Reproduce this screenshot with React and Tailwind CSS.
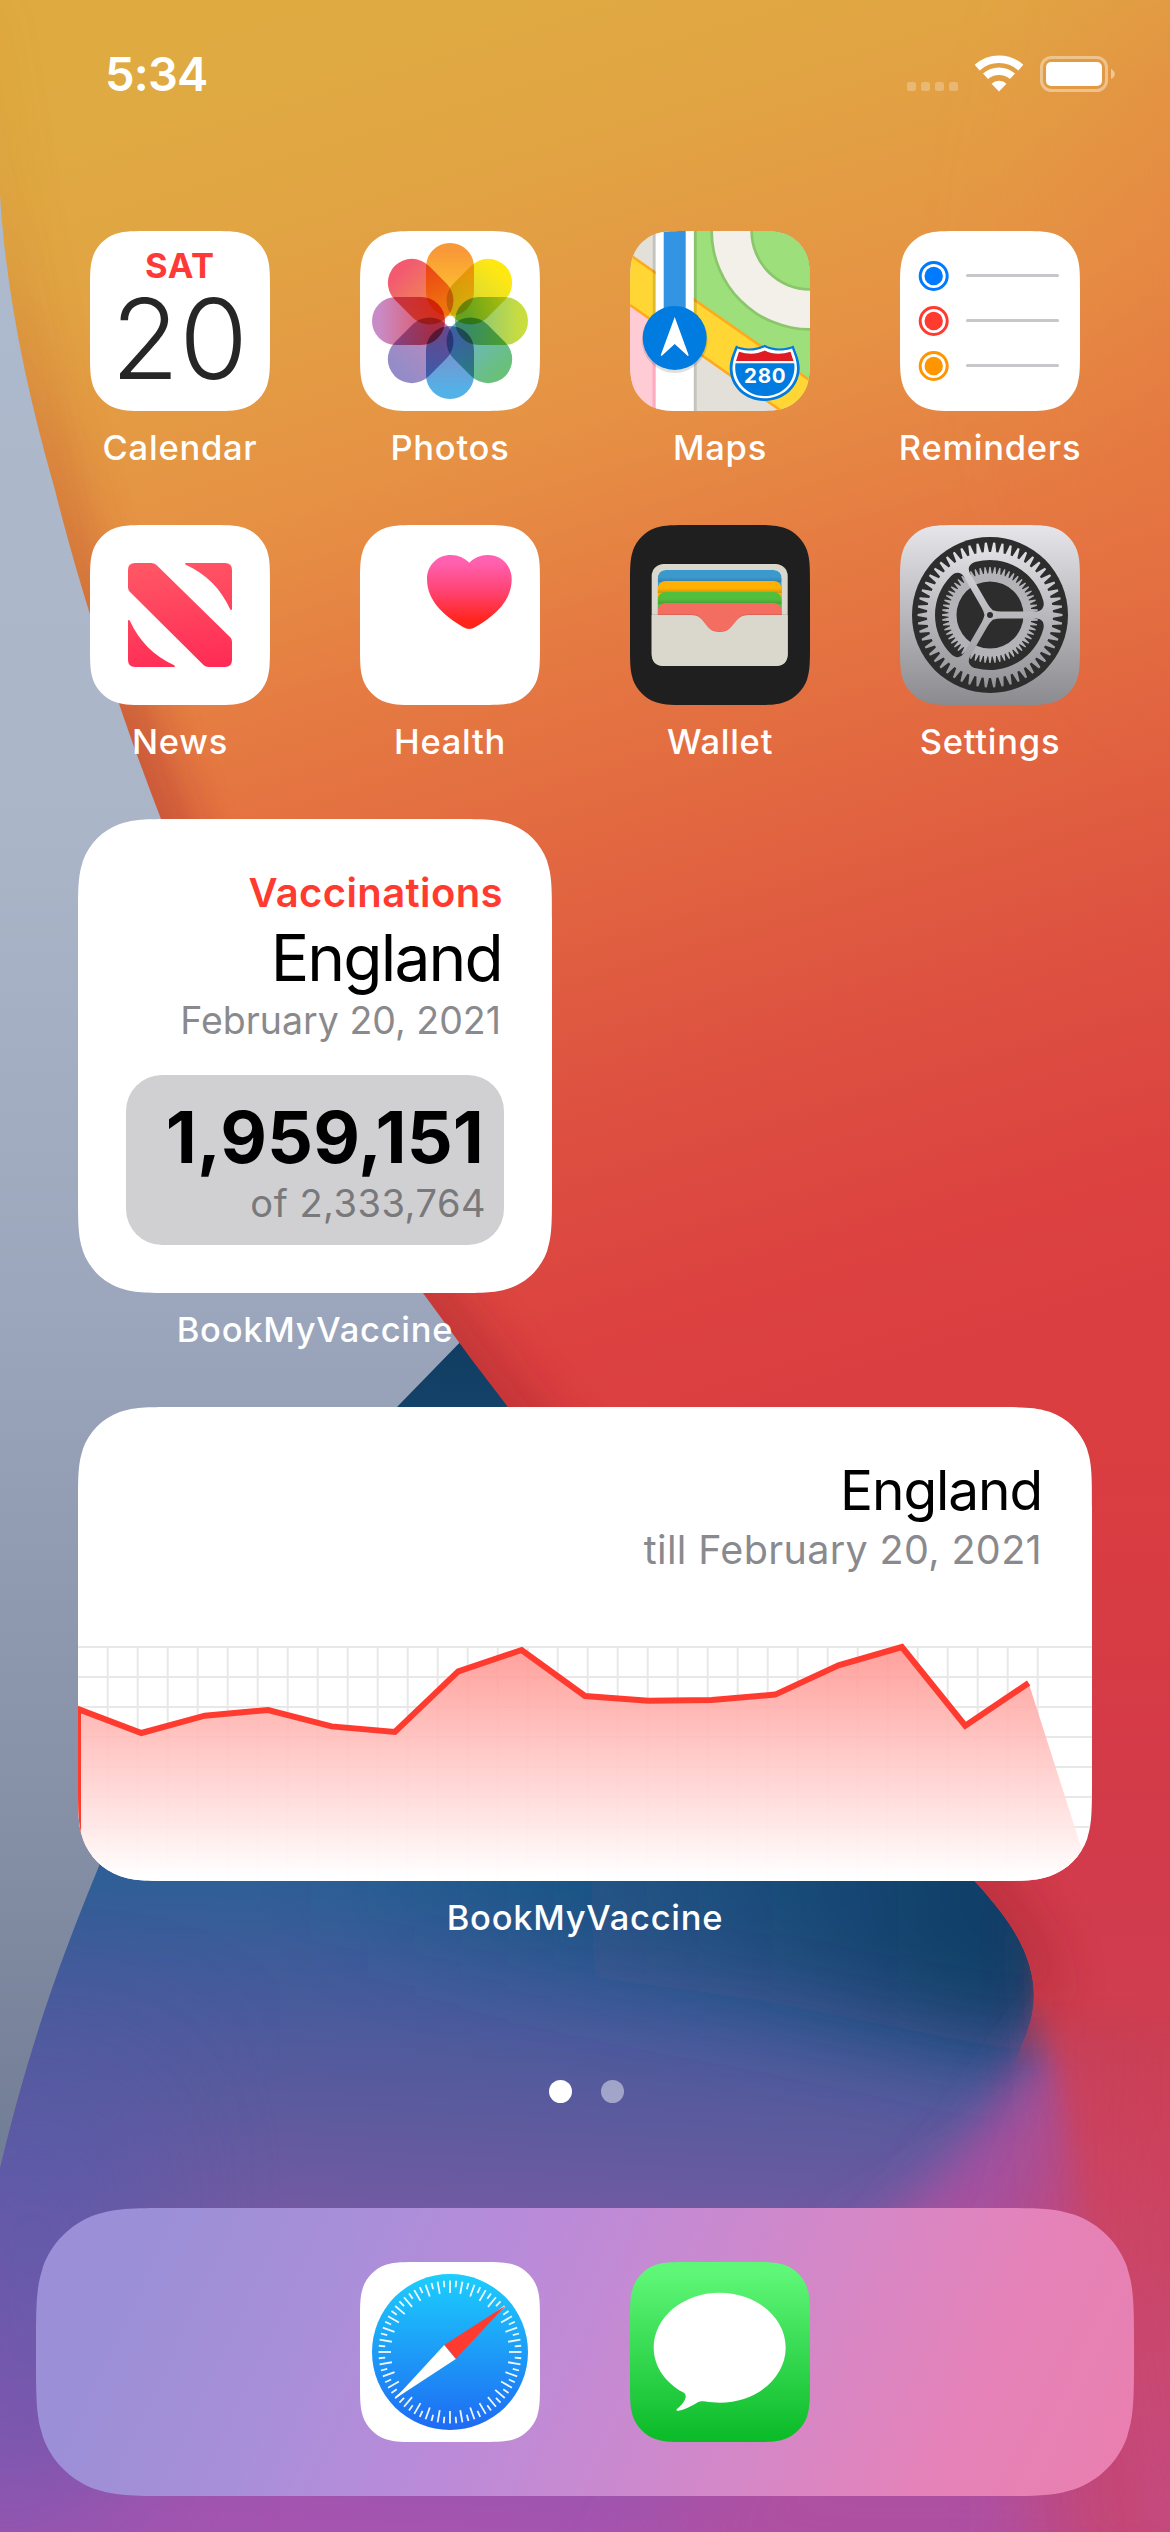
import React from "react";

const FONT = 'font-["Inter","Liberation_Sans",sans-serif]';

/* Continuous-corner rounded rectangle */
function squircle(w, h, r) {
  const pt = (corner, a, b) => {
    const x = a * r, y = b * r;
    if (corner === "tr") return `${w - x} ${y}`;
    if (corner === "br") return `${w - x} ${h - y}`;
    if (corner === "bl") return `${x} ${h - y}`;
    return `${x} ${y}`;
  };
  const A = 1.52866483, B = 1.088493, C = 0.868407, D = 0.669934, E = 0.065496;
  const F = 0.631494, G = 0.074911, H = 0.372824, I = 0.169059;
  const ccw = (c) =>
    `L${pt(c, A, 0)}C${pt(c, B, 0)} ${pt(c, C, 0)} ${pt(c, D, E)}L${pt(c, F, G)}` +
    `C${pt(c, H, I)} ${pt(c, I, H)} ${pt(c, G, F)}L${pt(c, E, D)}C${pt(c, 0, C)} ${pt(c, 0, B)} ${pt(c, 0, A)}`;
  const cw = (c) =>
    `L${pt(c, 0, A)}C${pt(c, 0, B)} ${pt(c, 0, C)} ${pt(c, E, D)}L${pt(c, G, F)}` +
    `C${pt(c, I, H)} ${pt(c, H, I)} ${pt(c, F, G)}L${pt(c, D, E)}C${pt(c, C, 0)} ${pt(c, B, 0)} ${pt(c, A, 0)}`;
  return `M${pt("tl", A, 0)}${ccw("tr")}${cw("br")}${ccw("bl")}${cw("tl")}Z`;
}

function Squircle({ w, h, r, className, children }) {
  return (
    <div className={className} style={{ clipPath: `path("${squircle(w, h, r)}")` }}>
      {children}
    </div>
  );
}

function Wallpaper() {
  return (
    <svg className="absolute inset-0 h-full w-full" viewBox="0 0 1170 2532">
      <defs>
        <linearGradient id="wGrey" x1="0" y1="0" x2="0" y2="2532" gradientUnits="userSpaceOnUse">
          <stop offset="0.1" stopColor="#adb9cc" />
          <stop offset="0.33" stopColor="#abb5c8" />
          <stop offset="0.52" stopColor="#9ba6bc" />
          <stop offset="0.73" stopColor="#848ea5" />
          <stop offset="0.85" stopColor="#727e96" />
        </linearGradient>
        <linearGradient id="wRed" x1="330" y1="0" x2="760" y2="1420" gradientUnits="userSpaceOnUse">
          <stop offset="0" stopColor="#dfab41" />
          <stop offset="0.13" stopColor="#e1a543" />
          <stop offset="0.32" stopColor="#e69144" />
          <stop offset="0.46" stopColor="#e57a42" />
          <stop offset="0.6" stopColor="#e26740" />
          <stop offset="0.76" stopColor="#dd5140" />
          <stop offset="0.92" stopColor="#dc4140" />
          <stop offset="1" stopColor="#db3e40" />
        </linearGradient>
        <linearGradient id="wRedLow" x1="0" y1="1400" x2="0" y2="2532" gradientUnits="userSpaceOnUse">
          <stop offset="0" stopColor="#d63a44" stopOpacity="0" />
          <stop offset="0.35" stopColor="#d33a49" />
          <stop offset="0.55" stopColor="#cf3e50" />
          <stop offset="0.75" stopColor="#cc4565" />
          <stop offset="1" stopColor="#c44c84" />
        </linearGradient>
        <linearGradient id="wEdge" x1="0" y1="180" x2="0" y2="720" gradientUnits="userSpaceOnUse">
          <stop offset="0" stopColor="#c8702f" stopOpacity="0.15" />
          <stop offset="0.45" stopColor="#b9482c" stopOpacity="0.5" />
          <stop offset="1" stopColor="#a0222a" stopOpacity="0.8" />
        </linearGradient>
        <linearGradient id="wBlue" x1="560" y1="1340" x2="500" y2="2532" gradientUnits="userSpaceOnUse">
          <stop offset="0" stopColor="#103c60" />
          <stop offset="0.25" stopColor="#205384" />
          <stop offset="0.46" stopColor="#2d5f96" />
          <stop offset="0.55" stopColor="#445b9b" />
          <stop offset="0.65" stopColor="#5c5a9e" />
          <stop offset="0.76" stopColor="#785aa4" />
          <stop offset="0.9" stopColor="#9556ab" />
          <stop offset="1" stopColor="#a554b0" />
        </linearGradient>
        <linearGradient id="wDeep" x1="300" y1="0" x2="980" y2="0" gradientUnits="userSpaceOnUse">
          <stop offset="0" stopColor="#0f4470" stopOpacity="0" />
          <stop offset="0.6" stopColor="#0f4470" stopOpacity="0.6" />
          <stop offset="1" stopColor="#0c3c64" stopOpacity="0.95" />
        </linearGradient>
        <linearGradient id="wFade" x1="0" y1="1995" x2="0" y2="2070" gradientUnits="userSpaceOnUse">
          <stop offset="0" stopColor="#fff" />
          <stop offset="1" stopColor="#000" />
        </linearGradient>
        <mask id="wRedMask" maskUnits="userSpaceOnUse" x="0" y="0" width="1170" height="2532">
          <rect width="1170" height="2532" fill="url(#wFade)" />
        </mask>
        <filter id="b12" x="-50%" y="-50%" width="200%" height="200%"><feGaussianBlur stdDeviation="12" /></filter>
        <filter id="b25" x="-50%" y="-50%" width="200%" height="200%"><feGaussianBlur stdDeviation="25" /></filter>
        <filter id="b45" x="-50%" y="-50%" width="200%" height="200%"><feGaussianBlur stdDeviation="45" /></filter>
        <filter id="b80" x="-50%" y="-50%" width="200%" height="200%"><feGaussianBlur stdDeviation="80" /></filter>
        <clipPath id="cRed">
          <path d="M0 0H1170V2100H1000L1026 2035C1040 2000 1038 1960 1000 1911C940 1830 650 1580 508 1407L472 1360L423 1293C330 1165 235 1010 161 819C120 713 80 590 55 490C25 385 6 290 0 195Z" />
        </clipPath>
        <clipPath id="cBlue">
          <path d="M1170 2532H0V2168C25 2065 50 1985 99 1866C170 1700 270 1530 397 1407L470 1332L1170 1500Z" />
        </clipPath>
      </defs>

      <rect width="1170" height="2532" fill="url(#wGrey)" />

      <g clipPath="url(#cBlue)">
        <rect y="1300" width="1170" height="1232" fill="url(#wBlue)" />
        <path d="M-80 2080L160 2080L120 2500L-80 2560Z" fill="#4a5cb0" opacity="0.5" filter="url(#b80)" />
        <path d="M1140 2090L1000 2190L860 2270L620 2600H1240Z" fill="#b2509f" opacity="0.8" filter="url(#b45)" />
        <path d="M250 1650H1250V2040L1010 2050L760 2000L250 1930Z" fill="url(#wDeep)" filter="url(#b45)" />
        <path d="M1085 1985C1045 2030 1005 2100 950 2165L820 2310H1080L1120 2100Z" fill="#aa51a0" opacity="0.85" filter="url(#b25)" />
        <path d="M1130 2010L1085 2110L1040 2240L1050 2600H1320V2000Z" fill="#c9456c" opacity="0.85" filter="url(#b45)" />
        <path d="M1046 1860L1044 2010L1062 2090L1100 2280L1150 2532H1320V1800Z" fill="url(#wRedLow)" opacity="0.8" filter="url(#b12)" />
        <path d="M1075 1900L1100 2280L1150 2532H1320V1800Z" fill="url(#wRedLow)" opacity="0.7" filter="url(#b45)" />
      </g>

      <g mask="url(#wRedMask)">
        <g clipPath="url(#cRed)">
          <rect width="1170" height="2110" fill="url(#wRed)" />
          <rect y="1400" width="1170" height="710" fill="url(#wRedLow)" />
          <ellipse cx="1240" cy="300" rx="160" ry="380" fill="#e5703f" opacity="0.25" filter="url(#b80)" />
          <path
            d="M1036 2000C1038 1980 1030 1950 1000 1911C940 1830 650 1580 508 1407L423 1293C330 1165 235 1010 161 819C120 713 80 590 55 490C25 385 6 290 0 195L-30 0"
            fill="none" stroke="url(#wEdge)" strokeWidth="40" opacity="0.7" filter="url(#b25)"
          />
        </g>
      </g>
    </svg>
  );
}

function StatusBar() {
  return (
    <header className="flex h-[231px] items-start justify-between pt-[44px] pr-[54px] pl-[105px] text-white">
      <time className="text-[47px] leading-[60px] font-semibold tracking-[-0.8px]">5:34</time>
      <div className="flex items-center pt-[8px]">
        <svg className="h-[44px] w-[210px]" viewBox="0 0 210 44">
          <g fill="#fff" opacity="0.25">
            {[0, 14, 28, 42].map((x) => (
              <rect key={x} x={1 + x} y="30" width="9" height="9" rx="2.5" />
            ))}
          </g>
          <g fill="none" stroke="#fff">
            <path d="M71.2 15.600A32.500 32.500 0 0 1 114.800 15.600" strokeWidth="7.500" />
            <path d="M79.500 24.300A20.200 20.200 0 0 1 106.500 24.300" strokeWidth="7.500" />
          </g>
          <path d="M93 39.500L85.500 31.800A11 11 0 0 1 100.500 31.800Z" fill="#fff" />
          <rect x="135.500" y="5.500" width="65" height="33" rx="10" fill="none" stroke="#fff" strokeOpacity="0.4" strokeWidth="3" />
          <rect x="140" y="10" width="56" height="24" rx="5" fill="#fff" />
          <path d="M205 17C210 19 210 25 205 27Z" fill="#fff" opacity="0.45" />
        </svg>
      </div>
    </header>
  );
}

function IconSvg({ children }) {
  return <svg className="h-[180px] w-[180px]" viewBox="0 0 180 180">{children}</svg>;
}

function CalendarIcon() {
  return (
    <IconSvg>
      <rect width="180" height="180" fill="#fff" />
      <text x="55" y="47.300" textLength="69" fontSize="34.500" fontWeight="700" fill="#ff3a36">SAT</text>
      <text x="21" y="148" textLength="137" lengthAdjust="spacingAndGlyphs" fontSize="111" fontWeight="300" fill="#262626">20</text>
    </IconSvg>
  );
}

const PETALS = [
  [0, "#f89838", "#ffcb2a"],
  [45, "#ffe812", "#cfd53c"],
  [90, "#cadd3f", "#7fc283"],
  [135, "#68c07a", "#6fb6d0"],
  [180, "#52b2e8", "#8688c4"],
  [225, "#948cc8", "#bd8abb"],
  [270, "#c98bc6", "#e2505c"],
  [315, "#f35a70", "#ee9050"],
];

function PhotosIcon() {
  return (
    <IconSvg>
      <defs>
        {PETALS.map(([a, from, to]) => (
          <linearGradient key={a} id={`petal${a}`} x1="0" y1="0" x2="0" y2="1">
            <stop offset="0.1" stopColor={from} />
            <stop offset="0.85" stopColor={to} />
          </linearGradient>
        ))}
      </defs>
      <rect width="180" height="180" fill="#fff" />
      {PETALS.map(([a]) => (
        <rect
          key={a} x="66" y="12" width="48" height="73" rx="24"
          fill={`url(#petal${a})`} transform={`rotate(${a} 90 90)`} className="mix-blend-multiply"
        />
      ))}
    </IconSvg>
  );
}

function MapsIcon() {
  return (
    <IconSvg>
      <rect width="180" height="180" fill="#e3e0d9" />
      <path d="M64 0H180V150L64 69Z" fill="#9de07b" />
      <circle cx="180" cy="0" r="99.700" fill="#8ac66b" />
      <circle cx="180" cy="0" r="97" fill="#f3f0e9" />
      <circle cx="180" cy="0" r="59.700" fill="#8ac66b" />
      <circle cx="180" cy="0" r="57" fill="#9de07b" />
      <path d="M0 74L27 92V180H0Z" fill="#ffccd6" />
      <path d="M0 24L180 149.500V200L0 74Z" fill="#ffd634" />
      <path d="M0 24L180 149.500M0 74L180 200" stroke="#ffa91c" strokeWidth="2.600" />
      <path d="M22.700 0H25.700V180H22.700ZM63.700 0H66.700V180H63.700Z" fill="#000" opacity="0.13" />
      <path d="M22.700 90H25.700V180H22.700Z" fill="#ffaac0" />
      <rect x="25.700" width="38" height="180" fill="#fff" />
      <rect x="33.700" width="22" height="90" fill="#3494e4" />
      <circle cx="44.700" cy="109" r="33" fill="#000" opacity="0.12" />
      <circle cx="44.700" cy="107" r="32" fill="#007bdf" />
      <path d="M44.700 86L58.700 124.200L57.800 125L44.700 113L31.600 125L30.700 124.200Z" fill="#fff" />
      <path d="M106 114.500C112 118 125 119 134.700 113.700C144 119 157 118 163.500 114.500C166 122 169.700 129 169.700 137C169.700 156 154 170 134.700 170C115 170 99.700 156 99.700 137C99.700 129 103 122 106 114.500Z" fill="#007bdf" />
      <path d="M107.500 117.500C116 120.500 126 120.500 134.700 116.200C143.500 120.500 153 120.500 162 117.500C164.500 124 167 130 167 137C167 154.500 152 167.300 134.700 167.300C117 167.300 102.500 154.500 102.500 137C102.500 130 105 124 107.500 117.500Z" fill="#fff" />
      <path d="M109 120.800C118 123.500 127 123.500 134.700 119.500C142.500 123.500 151.500 123.500 160.500 120.800L163.500 130H106Z" fill="#df1c24" />
      <path d="M105.500 132.200H164.200C166.500 150 153 165 134.700 165C116.500 165 103 150 105.500 132.200Z" fill="#007bdf" />
      <text x="114" y="151.700" textLength="41.500" fontSize="20.500" fontWeight="700" fill="#fff">280</text>
    </IconSvg>
  );
}

function RemindersIcon() {
  return (
    <IconSvg>
      <rect width="180" height="180" fill="#fff" />
      {[["#007aff", 45], ["#ff3b30", 90], ["#ff9500", 135]].map(([c, y]) => (
        <g key={c}>
          <circle cx="33.700" cy={y} r="13.500" fill="none" stroke={c} strokeWidth="3" />
          <circle cx="33.700" cy={y} r="9.200" fill={c} />
          <rect x="66" y={y - 2} width="93" height="3" rx="1.500" fill="#c7c6cb" />
        </g>
      ))}
    </IconSvg>
  );
}

function NewsIcon() {
  return (
    <IconSvg>
      <defs>
        <linearGradient id="news" x1="80" y1="38" x2="96" y2="142" gradientUnits="userSpaceOnUse">
          <stop offset="0" stopColor="#ff5665" />
          <stop offset="1" stopColor="#ff2d56" />
        </linearGradient>
      </defs>
      <rect width="180" height="180" fill="#fff" />
      <g fill="url(#news)">
        <path d="M38 45Q38 38 45 38H61.500Q65 38 67 40.500L140.500 112.500Q142 114 142 117V135Q142 142 135 142H118.500Q115.500 142 113.500 140L40 67Q38 65 38 62.500Z" />
        <path d="M95.500 38H135Q142 38 142 45V84C142 85.500 140.500 85 140 84C131 64 116 49 95.800 39.800Q94.500 38.500 95.500 38Z" />
        <path d="M84.500 142H45Q38 142 38 135V96C38 94.500 39.500 95 40 96C49 116 64 131 84.200 140.200Q85.500 141.500 84.500 142Z" />
      </g>
    </IconSvg>
  );
}

function HealthIcon() {
  return (
    <IconSvg>
      <defs>
        <linearGradient id="heart" x1="0" y1="30" x2="0" y2="104" gradientUnits="userSpaceOnUse">
          <stop offset="0.1" stopColor="#ff61b0" />
          <stop offset="0.5" stopColor="#ff4270" />
          <stop offset="0.9" stopColor="#ff2419" />
        </linearGradient>
      </defs>
      <rect width="180" height="180" fill="#fff" />
      <path d="M109.300 37.800C104.500 33 98 30 91 30C77 30 67 40.500 67 54C67 76 84 90.500 103 102Q109.300 106 115.500 102C135 90.500 151.700 76 151.700 54C151.700 40.500 141.500 30 127.500 30C120.500 30 114 33 109.300 37.800Z" fill="url(#heart)" />
    </IconSvg>
  );
}

function WalletIcon() {
  return (
    <IconSvg>
      <defs>
        <clipPath id="walletClip"><rect x="27.700" y="45" width="124" height="90" rx="8" /></clipPath>
        <linearGradient id="cardShade" x1="0" y1="0" x2="0" y2="1">
          <stop offset="0" stopColor="#000" stopOpacity="0" />
          <stop offset="1" stopColor="#000" stopOpacity="0.16" />
        </linearGradient>
      </defs>
      <rect width="180" height="180" fill="#1f1f1f" />
      <rect x="21.700" y="39" width="136" height="102" rx="12" fill="#dad8cc" />
      <g clipPath="url(#walletClip)">
        {[[45, "#3c99cd"], [56, "#ffb003"], [67, "#52be3d"], [78, "#f46d61"]].map(([y, c], i) => (
          <g key={y}>
            <rect x="27.700" y={y} width="124" height="60" rx="8" fill={c} />
            {i < 3 && <rect x="27.700" y={y + 7} width="124" height="5" fill="url(#cardShade)" />}
          </g>
        ))}
      </g>
      <path d="M21.700 89.300H61C77 89.300 72 106.500 89.700 106.500C107 106.500 102 89.300 119 89.300H157.700V129Q157.700 141 145.700 141H33.700Q21.700 141 21.700 129Z" fill="#000" opacity="0.13" />
      <path d="M21.700 90H61C77 90 73 107 89.700 107C106 107 102 90 119 90H157.700V129Q157.700 141 145.700 141H33.700Q21.700 141 21.700 129Z" fill="#dad8cc" />
    </IconSvg>
  );
}

const polar = (r, deg) => {
  const a = (deg * Math.PI) / 180;
  return [90 + r * Math.cos(a), 90 + r * Math.sin(a)];
};
const rot = (x, y, deg) => {
  const a = (deg * Math.PI) / 180;
  return `${(90 + x * Math.cos(a) - y * Math.sin(a)).toFixed(2)} ${(90 + x * Math.sin(a) + y * Math.cos(a)).toFixed(2)}`;
};

function gearPath(n, root, tip, baseHalf, tipHalf) {
  const step = 360 / n;
  let d = "";
  for (let i = 0; i < n; i++) {
    const a = i * step;
    [[root, a - step * baseHalf], [tip, a - step * tipHalf], [tip, a + step * tipHalf], [root, a + step * baseHalf]].forEach(
      ([r, g], k) => {
        const [x, y] = polar(r, g);
        d += `${i === 0 && k === 0 ? "M" : "L"}${x.toFixed(2)} ${y.toFixed(2)}`;
      }
    );
  }
  return d + "Z";
}

const ring = (r) => `M${90 - r} 90a${r} ${r} 0 1 0 ${2 * r} 0a${r} ${r} 0 1 0 ${-2 * r} 0Z`;

/* Opening between the spoke at angle a and the one at a + 120 */
const opening = (a) =>
  `M${rot(11, 3.5, a)}L${rot(46, 3.5, a)}C${rot(52, 3.5, a)} ${rot(55, 8, a)} ${rot(53.2, 14.5, a)}` +
  `A55.500 55.500 0 0 1 ${rot(53.2, -14.5, a + 120)}C${rot(55, -8, a + 120)} ${rot(52, -3.5, a + 120)} ${rot(46, -3.5, a + 120)}` +
  `L${rot(11, -3.5, a + 120)}Q${rot(7, -3.5, a + 120)} ${rot(5.500, 0, a + 60)}Q${rot(7, 3.5, a)} ${rot(11, 3.5, a)}Z`;

function SettingsIcon() {
  return (
    <IconSvg>
      <defs>
        <linearGradient id="setBg" x1="0" y1="0" x2="0" y2="1">
          <stop offset="0" stopColor="#e6e5ea" />
          <stop offset="1" stopColor="#8b8a8f" />
        </linearGradient>
        <linearGradient id="setGear" x1="0" y1="18" x2="0" y2="162" gradientUnits="userSpaceOnUse">
          <stop offset="0" stopColor="#e4e3e8" />
          <stop offset="0.5" stopColor="#b9b8bd" />
          <stop offset="1" stopColor="#949398" />
        </linearGradient>
      </defs>
      <rect width="180" height="180" fill="url(#setBg)" />
      <circle cx="90" cy="90" r="78" fill="#2d2d2d" />
      <path d={gearPath(60, 41.5, 48, 0.4, 0.13) + ring(33.5)} fill="#b4b3b8" fillRule="evenodd" />
      <path d={gearPath(54, 63, 72.500, 0.36, 0.12) + opening(0) + opening(120) + opening(240)} fill="url(#setGear)" fillRule="evenodd" />
      <circle cx="90" cy="90" r="3" fill="#2d2d2d" />
    </IconSvg>
  );
}

function SafariIcon() {
  return (
    <IconSvg>
      <defs>
        <linearGradient id="safari" x1="0" y1="0" x2="0" y2="1">
          <stop offset="0" stopColor="#1ccefd" />
          <stop offset="1" stopColor="#1e6af2" />
        </linearGradient>
      </defs>
      <rect width="180" height="180" fill="#fff" />
      <circle cx="90" cy="90" r="78" fill="url(#safari)" />
      {Array.from({ length: 72 }, (_, i) => (
        <path key={i} d={i % 2 ? "M90 18.500V25" : "M90 18.500V31"} stroke="#fff" strokeWidth="1.800" opacity="0.92" transform={`rotate(${i * 5} 90 90)`} />
      ))}
      <path d="M145.700 43.400L84.200 83L95.800 97Z" fill="#ff3b30" />
      <path d="M34.300 137.300L84.200 83L95.800 97Z" fill="#fff" />
    </IconSvg>
  );
}

function MessagesIcon() {
  return (
    <IconSvg>
      <defs>
        <linearGradient id="msg" x1="0" y1="0" x2="0" y2="1">
          <stop offset="0.05" stopColor="#5ff778" />
          <stop offset="1" stopColor="#0aba27" />
        </linearGradient>
      </defs>
      <rect width="180" height="180" fill="url(#msg)" />
      <path d="M89.700 30.700C126 30.700 155.700 55.300 155.700 85.700C155.700 116 126 140.700 89.700 140.700C85 140.700 80 140.300 75.500 139.600C72 139 70 139.300 67 140.800C61.500 143.800 55.500 147.800 48.300 148.800C46.300 149 46 147.700 47.200 146.800C52.500 142.500 55.500 138 55.700 134.800C55.800 132.500 55 131.500 53 130.300C34.500 120.200 23.700 103.500 23.700 85.700C23.700 55.300 53 30.700 89.700 30.700Z" fill="#fff" />
    </IconSvg>
  );
}

function Label({ children }) {
  return (
    <span className="mt-[14px] text-[34.5px] leading-[46px] font-medium tracking-[0.75px] whitespace-nowrap text-white">
      {children}
    </span>
  );
}

function AppIcon({ children, label }) {
  return (
    <div className="flex h-[294px] w-[180px] flex-col items-center">
      <Squircle w={180} h={180} r={40} className="h-[180px] w-[180px] shrink-0">{children}</Squircle>
      <Label>{label}</Label>
    </div>
  );
}

const SERIES = [1709, 1733, 1715.7, 1710, 1726.4, 1732, 1671.4, 1650, 1696, 1700.7, 1700, 1694.6, 1665.4, 1647, 1725.7, 1683];

function Chart() {
  const pts = SERIES.map((y, i) => `${(i * 63.375).toFixed(2)} ${(y - 1640).toFixed(1)}`);
  return (
    <svg className="block h-[241px] w-[1014px] shrink-0" viewBox="0 0 1014 241">
      <defs>
        <linearGradient id="area" x1="0" y1="5" x2="0" y2="236" gradientUnits="userSpaceOnUse">
          <stop offset="0" stopColor="#ff928d" stopOpacity="0.87" />
          <stop offset="1" stopColor="#ffffff" stopOpacity="0.95" />
        </linearGradient>
      </defs>
      <g stroke="#e8e8e8" strokeWidth="2">
        {Array.from({ length: 8 }, (_, i) => <path key={i} d={`M0 ${7 + 30 * i}H1014`} />)}
        {Array.from({ length: 32 }, (_, i) => <path key={i} d={`M${29.7 + 30 * i} 7V241`} />)}
      </g>
      <path d={`M${pts.join("L")}L1014 241H0Z`} fill="url(#area)" />
      <path d={`M0 241L${pts.join("L")}`} fill="none" stroke="#ff3b30" strokeWidth="6" />
    </svg>
  );
}

export default function App() {
  return (
    <main className={`relative h-[2532px] w-[1170px] overflow-hidden bg-[#a9b7ca] ${FONT}`}>
      <Wallpaper />
      <div className="relative flex h-full flex-col">
        <StatusBar />

        <section className="grid grid-cols-4 gap-x-[90px] px-[90px]">
          <AppIcon label="Calendar"><CalendarIcon /></AppIcon>
          <AppIcon label="Photos"><PhotosIcon /></AppIcon>
          <AppIcon label="Maps"><MapsIcon /></AppIcon>
          <AppIcon label="Reminders"><RemindersIcon /></AppIcon>
          <AppIcon label="News"><NewsIcon /></AppIcon>
          <AppIcon label="Health"><HealthIcon /></AppIcon>
          <AppIcon label="Wallet"><WalletIcon /></AppIcon>
          <AppIcon label="Settings"><SettingsIcon /></AppIcon>
        </section>

        <section className="flex flex-col px-[78px]">
          <div className="flex h-[588px] w-[474px] flex-col items-center">
            <Squircle w={474} h={474} r={66} className="flex h-[474px] w-[474px] shrink-0 flex-col items-end bg-white px-[48px] pt-[50px]">
              <p className="mr-[1px] text-[40px] leading-[48px] font-semibold tracking-[0.4px] text-[#ff3b30]">Vaccinations</p>
              <p className="mr-[2px] pt-[1px] text-[64px] leading-[80px] font-normal tracking-[-1.8px] text-black">England</p>
              <p className="mr-[3px] text-[37.5px] leading-[45px] font-normal tracking-[0px] text-[#8a8a8e]">February 20, 2021</p>
              <div className="mt-[32px] flex h-[170px] w-[378px] flex-col items-end rounded-[36px] bg-[#d0d0d2] pt-[22px] pr-[20px]">
                <p className="text-[72px] leading-[80px] font-bold tracking-[0.1px] text-black">1,959,151</p>
                <p className="mr-[-2px] pt-[3px] text-[38px] leading-[46px] font-normal tracking-[0.5px] text-[#79797c]">of 2,333,764</p>
              </div>
            </Squircle>
            <Label>BookMyVaccine</Label>
          </div>

          <div className="flex h-[588px] w-[1014px] flex-col items-center">
            <Squircle w={1014} h={474} r={66} className="flex h-[474px] w-[1014px] shrink-0 flex-col items-end justify-between bg-white pt-[48px]">
              <div className="flex flex-col items-end pr-[50px]">
                <p className="text-[55px] leading-[70px] font-normal tracking-[-1.1px] text-black">England</p>
                <p className="pt-[1px] text-[39.5px] leading-[48px] font-normal tracking-[0.35px] text-[#8a8a8e]">till February 20, 2021</p>
              </div>
              <Chart />
            </Squircle>
            <Label>BookMyVaccine</Label>
          </div>
        </section>

        <nav className="flex h-[213px] items-start justify-center gap-[29px] pt-[85px] pl-[2px]">
          <span className="h-[23px] w-[23px] rounded-full bg-white" />
          <span className="h-[23px] w-[23px] rounded-full bg-white/45" />
        </nav>

        <div className="px-[36px]">
          <Squircle
            w={1098} h={288} r={93}
            className="flex h-[288px] w-[1098px] justify-center gap-[90px] bg-[linear-gradient(115deg,#9b8fd7_10%,#a88fd9_26%,#b88bda_40%,#c68ad2_53%,#d587c6_68%,#e682b8_84%,#e97fae_100%)] pt-[54px]"
          >
            <Squircle w={180} h={180} r={40} className="h-[180px] w-[180px]"><SafariIcon /></Squircle>
            <Squircle w={180} h={180} r={40} className="h-[180px] w-[180px]"><MessagesIcon /></Squircle>
          </Squircle>
        </div>
      </div>
    </main>
  );
}
